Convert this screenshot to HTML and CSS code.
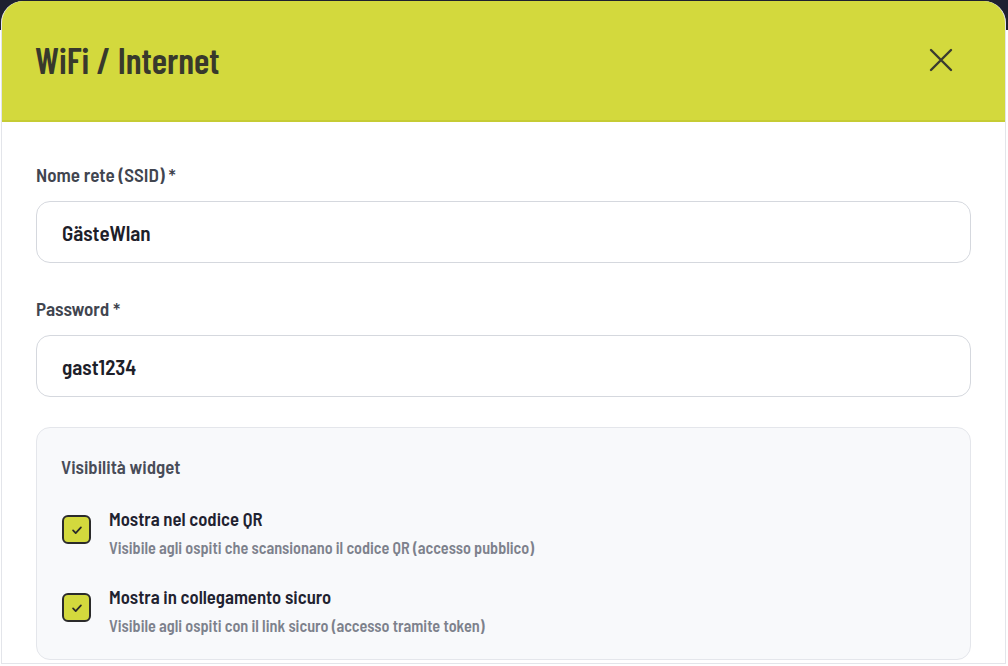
FILE: index.html
```html
<!DOCTYPE html>
<html lang="it">
<head>
<meta charset="utf-8">
<title>WiFi / Internet</title>
<link rel="stylesheet" href="styles.css">
</head>
<body>
<div class="frame">
  <div class="modal">
    <header class="modal-header">
      <h1 class="modal-title">WiFi / Internet</h1>
      <button class="close-btn" aria-label="Chiudi">
        <svg width="24" height="24" viewBox="0 0 24 24" fill="none" stroke="currentColor" stroke-width="2.4" stroke-linecap="round"><path d="M2 2L22 22M22 2L2 22"/></svg>
      </button>
    </header>
    <div class="modal-body">
      <div class="field">
        <label class="field-label">Nome rete (SSID) *</label>
        <div class="input">GästeWlan</div>
      </div>
      <div class="field">
        <label class="field-label">Password *</label>
        <div class="input">gast1234</div>
      </div>
      <div class="visibility">
        <div class="visibility-title">Visibilità widget</div>
        <div class="option">
          <span class="checkbox"><svg width="14" height="14" viewBox="0 0 16 16" fill="none" stroke="#2a2a2a" stroke-width="2" stroke-linecap="round" stroke-linejoin="round"><path d="M3.5 8.5l3 3 6-6.5"/></svg></span>
          <div class="option-text">
            <div class="option-title">Mostra nel codice QR</div>
            <div class="option-desc">Visibile agli ospiti che scansionano il codice QR (accesso pubblico)</div>
          </div>
        </div>
        <div class="option">
          <span class="checkbox"><svg width="14" height="14" viewBox="0 0 16 16" fill="none" stroke="#2a2a2a" stroke-width="2" stroke-linecap="round" stroke-linejoin="round"><path d="M3.5 8.5l3 3 6-6.5"/></svg></span>
          <div class="option-text">
            <div class="option-title">Mostra in collegamento sicuro</div>
            <div class="option-desc">Visibile agli ospiti con il link sicuro (accesso tramite token)</div>
          </div>
        </div>
      </div>
    </div>
  </div>
</div>
</body>
</html>
```
FILE: styles.css
```css
* { box-sizing: border-box; }
html, body { margin: 0; padding: 0; }
body {
  background: #ffffff;
  font-family: "Barlow Semi Condensed", "Roboto Condensed", sans-serif;
  width: 1008px;
  height: 666px;
  overflow: hidden;
}
.frame {
  width: 1008px;
  height: 666px;
  padding: 1px 2px 2px 1px;
  background: linear-gradient(#1e2030, #1e2030) no-repeat;
  background-size: 100% 30px;
}
.modal {
  height: 100%;
  background: #ffffff;
  border: 1px solid #e3e5ea;
  border-top: none;
  border-radius: 22px 22px 0 0;
  overflow: hidden;
}
.modal-header {
  height: 121px;
  background: #d3d93d;
  border-bottom: 2px solid #c6cc34;
  display: flex;
  align-items: center;
  justify-content: space-between;
  padding: 0 52px 2px 33px;
}
.modal-title {
  margin: 0;
  font-family: "Barlow Condensed", "Barlow Semi Condensed", sans-serif;
  font-size: 36px;
  font-weight: 600;
  color: #38392c;
}
.close-btn {
  background: none;
  border: none;
  padding: 0;
  color: #3a3b30;
  display: flex;
  cursor: pointer;
}
.modal-body {
  padding: 43px 34px 0 34px;
}
.field { margin-bottom: 36px; }
.field:nth-child(2) { margin-bottom: 30px; }
.field-label {
  display: block;
  font-size: 19.1px;
  font-weight: 600;
  color: #41454f;
  line-height: 20px;
  margin-bottom: 16px;
}
.input {
  height: 62px;
  border: 1px solid #d5d8de;
  border-radius: 14px;
  padding: 0 25px;
  display: flex;
  align-items: center;
  font-size: 21px;
  font-weight: 600;
  color: #1d2029;
}
.visibility {
  background: #f8f9fb;
  border: 1px solid #e4e6eb;
  border-radius: 14px;
  padding: 28px 24px 23px 24px;
}
.visibility-title {
  font-size: 18.8px;
  font-weight: 600;
  color: #484c58;
  line-height: 22px;
  margin-bottom: 29px;
}
.option {
  display: flex;
  align-items: flex-start;
  gap: 18px;
}
.option + .option { margin-top: 27px; }
.checkbox {
  width: 29px;
  height: 29px;
  margin-top: 8px;
  margin-left: 1px;
  border: 2.5px solid #2b2b2b;
  border-radius: 6px;
  background: #d3d93d;
  display: flex;
  align-items: center;
  justify-content: center;
  flex: none;
}
.option-title {
  font-size: 18.7px;
  font-weight: 600;
  color: #1f2230;
  line-height: 24px;
}
.option-desc {
  font-size: 16.2px;
  font-weight: 600;
  color: #7d818c;
  line-height: 20px;
  margin-top: 7px;
}
```
